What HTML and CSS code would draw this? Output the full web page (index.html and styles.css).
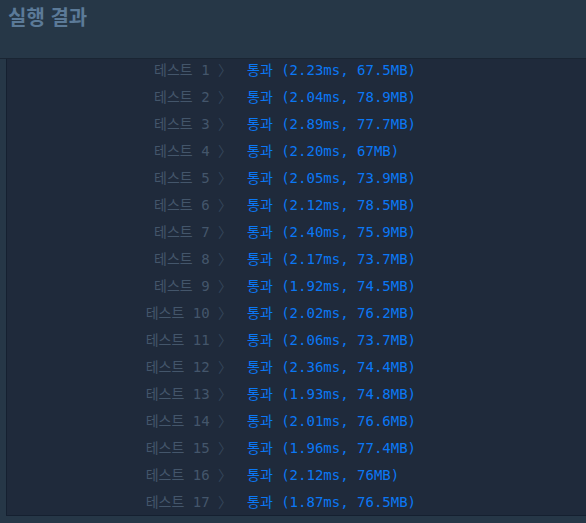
FILE: index.html
```html
<!DOCTYPE html>
<html lang="ko">
<head>
    <meta charset="UTF-8">
    <title>실행 결과</title>
    <link rel="stylesheet" href="styles.css">
</head>
<body>
    <div class="run-section">
        <div class="run-header">
            <h5>실행 결과</h5>
        </div>

        <div class="console">
            <div class="result-row"><span class="label">테스트 1 <i>〉</i></span><span class="passed">통과 (2.23ms, 67.5MB)</span></div>
            <div class="result-row"><span class="label">테스트 2 <i>〉</i></span><span class="passed">통과 (2.04ms, 78.9MB)</span></div>
            <div class="result-row"><span class="label">테스트 3 <i>〉</i></span><span class="passed">통과 (2.89ms, 77.7MB)</span></div>
            <div class="result-row"><span class="label">테스트 4 <i>〉</i></span><span class="passed">통과 (2.20ms, 67MB)</span></div>
            <div class="result-row"><span class="label">테스트 5 <i>〉</i></span><span class="passed">통과 (2.05ms, 73.9MB)</span></div>
            <div class="result-row"><span class="label">테스트 6 <i>〉</i></span><span class="passed">통과 (2.12ms, 78.5MB)</span></div>
            <div class="result-row"><span class="label">테스트 7 <i>〉</i></span><span class="passed">통과 (2.40ms, 75.9MB)</span></div>
            <div class="result-row"><span class="label">테스트 8 <i>〉</i></span><span class="passed">통과 (2.17ms, 73.7MB)</span></div>
            <div class="result-row"><span class="label">테스트 9 <i>〉</i></span><span class="passed">통과 (1.92ms, 74.5MB)</span></div>
            <div class="result-row"><span class="label">테스트 10 <i>〉</i></span><span class="passed">통과 (2.02ms, 76.2MB)</span></div>
            <div class="result-row"><span class="label">테스트 11 <i>〉</i></span><span class="passed">통과 (2.06ms, 73.7MB)</span></div>
            <div class="result-row"><span class="label">테스트 12 <i>〉</i></span><span class="passed">통과 (2.36ms, 74.4MB)</span></div>
            <div class="result-row"><span class="label">테스트 13 <i>〉</i></span><span class="passed">통과 (1.93ms, 74.8MB)</span></div>
            <div class="result-row"><span class="label">테스트 14 <i>〉</i></span><span class="passed">통과 (2.01ms, 76.6MB)</span></div>
            <div class="result-row"><span class="label">테스트 15 <i>〉</i></span><span class="passed">통과 (1.96ms, 77.4MB)</span></div>
            <div class="result-row"><span class="label">테스트 16 <i>〉</i></span><span class="passed">통과 (2.12ms, 76MB)</span></div>
            <div class="result-row"><span class="label">테스트 17 <i>〉</i></span><span class="passed">통과 (1.87ms, 76.5MB)</span></div>
        </div>
    </div>
</body>
</html>
```

FILE: styles.css
```css
body {
    margin: 0;
    background-color: #263747;
    font-family: "Noto Sans CJK KR", "Noto Sans", sans-serif;
}

.run-section {
    height: 523px;
    overflow: hidden;
}

.run-header {
    height: 59px;
    padding: 3px 8px 0;
    box-sizing: border-box;
    border-bottom: 1px solid #1a2533;
}

.run-header h5 {
    margin: 0;
    font-size: 20px;
    font-weight: 700;
    line-height: 28px;
    color: #5b7a98;
}

.console {
    height: 457px;
    margin-left: 6px;
    box-sizing: border-box;
    background-color: #1f2a3b;
    border-left: 1px solid #152030;
    border-bottom: 1px solid #152030;
    font-family: "DejaVu Sans Mono", "Noto Sans CJK KR", monospace;
    font-size: 14px;
}

.result-row {
    display: grid;
    grid-template-columns: 225px 1fr;
    column-gap: 15px;
    line-height: 23px;
    padding-bottom: 4px;
    white-space: pre;
}

.result-row .label {
    text-align: right;
    color: #44566b;
}

.result-row .label i {
    font-style: normal;
    color: #34455a;
}

.result-row .passed {
    color: #0b78f5;
}
```
